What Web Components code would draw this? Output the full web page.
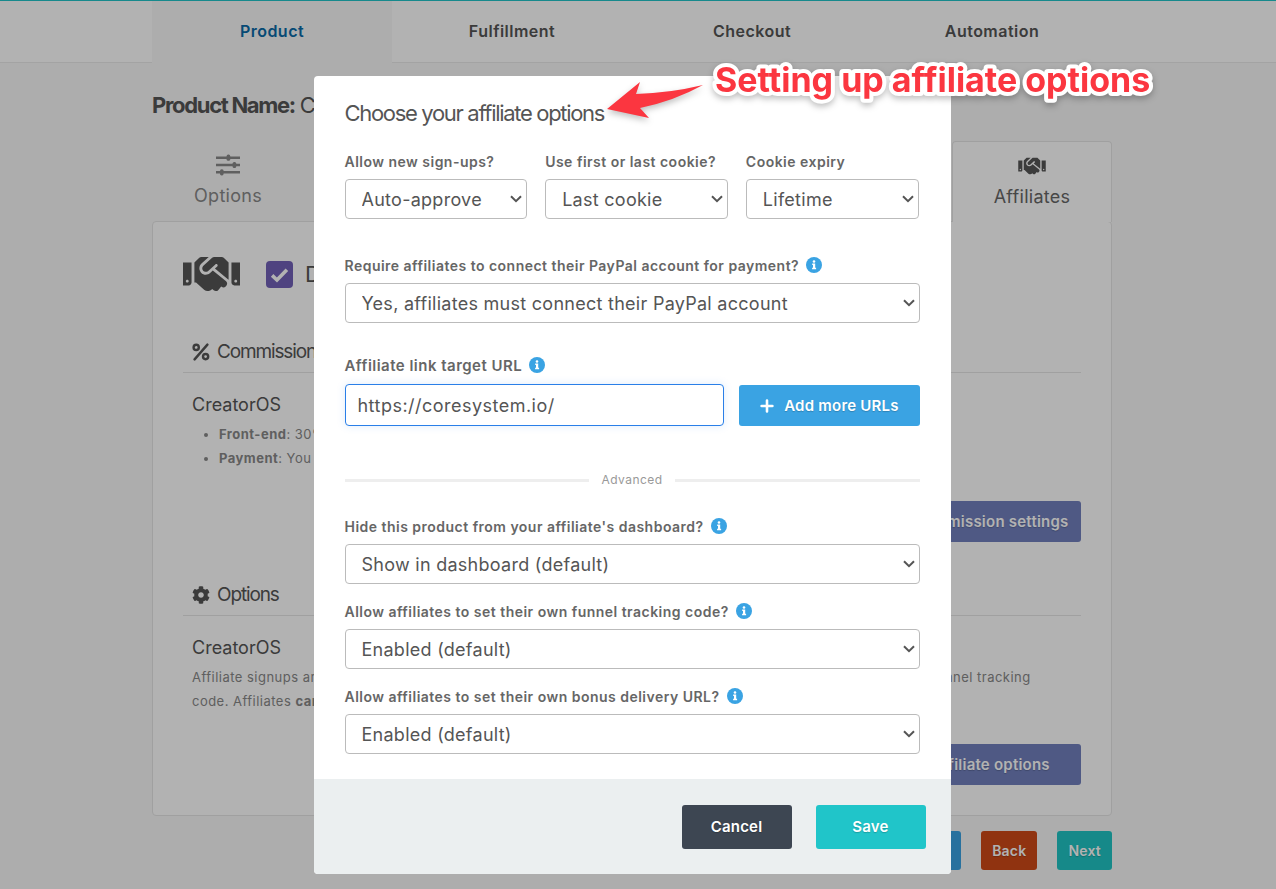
<!DOCTYPE html>
<html lang="en">
<head>
<meta charset="utf-8">
<meta name="viewport" content="width=device-width, initial-scale=1">
<title>Product - Affiliates</title>
<style>
    :root {
        --teal: #20c5c9;
        --blue: #3aa3e3;
        --track-wide: 0.03em;
        --track-mid: 0.015em;
        --track-tight: -0.06em;
        --gutter: 12px;
    }
    body {
        margin: 0;
        min-height: 100vh;
        overflow: hidden;
        background: #f8f8f8;
        color: #555;
        font-family: Inter, "Liberation Sans", sans-serif;
        letter-spacing: var(--track-wide);
    }
</style>
</head>
<body>
<product-page>
    <step-nav>
        <a href="#product" class="active">Product</a>
        <a href="#fulfillment">Fulfillment</a>
        <a href="#checkout">Checkout</a>
        <a href="#automation">Automation</a>
    </step-nav>
    <product-panel>
        <settings-section icon="percent" name="Commissions" product="CreatorOS" action="Edit commission settings">
            <ul>
                <li><b>Front-end</b>: 30%</li>
                <li><b>Payment</b>: You</li>
            </ul>
        </settings-section>
        <settings-section icon="cog" name="Options" product="CreatorOS" action="Edit affiliate options">
            <p>Affiliate signups are approved automatically and the last cookie is used for a lifetime. They can all set their own funnel tracking code. Affiliates <b>can</b></p>
        </settings-section>
    </product-panel>
</product-page>

<modal-dialog name="Choose your affiliate options">
    <div class="row">
        <select-field label="Allow new sign-ups?" value="Auto-approve"></select-field>
        <select-field label="Use first or last cookie?" value="Last cookie"></select-field>
        <select-field label="Cookie expiry" value="Lifetime"></select-field>
    </div>
    <select-field class="wide" info label="Require affiliates to connect their PayPal account for payment?" value="Yes, affiliates must connect their PayPal account"></select-field>
    <url-field label="Affiliate link target URL" value="https://coresystem.io/"></url-field>
    <line-divider>Advanced</line-divider>
    <div class="stack">
        <select-field info label="Hide this product from your affiliate's dashboard?" value="Show in dashboard (default)"></select-field>
        <select-field info label="Allow affiliates to set their own funnel tracking code?" value="Enabled (default)"></select-field>
        <select-field info label="Allow affiliates to set their own bonus delivery URL?" value="Enabled (default)"></select-field>
    </div>
    <action-button slot="footer" color="#3d4652" size="large">Cancel</action-button>
    <action-button slot="footer" color="#20c5c9" size="large">Save</action-button>
</modal-dialog>

<callout-note></callout-note>

<style>
    .row {
        display: grid;
        grid-template-columns: 182fr 182fr 173fr;
        gap: 18px;
    }
    .wide {
        margin: 37px 0 33px;
    }
    .stack {
        display: grid;
        gap: 18px;
    }
</style>

<script>
const icons = {
    handshake: ["0 0 640 512", `<path d="M434.7 64h-85.9c-8 0-15.7 3-21.6 8.4l-98.3 90c-.1.1-.2.3-.3.4-16.6 15.6-16.3 40.5-2.1 56 12.7 13.9 39.4 17.6 56.1 2.7.1-.1.3-.1.4-.2l79.9-73.2c6.5-5.9 16.7-5.5 22.6 1 6 6.5 5.5 16.6-1 22.6l-26.1 23.9L504 313.8c2.9 2.4 5.5 5 7.9 7.7V128l-54.6-54.6c-5.9-6-14.1-9.4-22.6-9.4zM544 128.2v223.9c0 17.7 14.3 32 32 32h64V128.2h-96zm48 223.9c-8.8 0-16-7.2-16-16s7.2-16 16-16 16 7.2 16 16-7.2 16-16 16zM0 384h64c17.7 0 32-14.3 32-32V128.2H0V384zm48-63.9c8.8 0 16 7.2 16 16s-7.2 16-16 16-16-7.2-16-16c0-8.9 7.2-16 16-16zm435.9 18.6L334.6 217.5l-30 27.5c-29.7 27.1-75.2 24.5-101.7-4.4-26.9-29.4-24.8-74.9 4.4-101.7L289.1 64h-83.8c-8.5 0-16.6 3.4-22.6 9.4L128 128v223.9h18.3l90.5 81.9c27.4 22.3 67.7 18.1 90-9.3l.2-.2 17.9 15.5c15.9 13 39.4 10.5 52.3-5.4l31.4-38.6 5.4 4.4c13.7 11.1 33.9 9.1 45-4.6l9.5-11.7c11.2-13.8 9.1-33.9-4.6-45.1z"/>`],
    cog: ["0 0 512 512", `<path d="M487.4 315.7l-42.6-24.6c4.3-23.2 4.3-47 0-70.2l42.6-24.6c4.9-2.8 7.1-8.6 5.5-14-11.1-35.6-30-67.8-54.7-94.6-3.8-4.1-10-5.1-14.8-2.3L380.8 110c-17.9-15.4-38.5-27.3-60.8-35.1V25.8c0-5.6-3.9-10.5-9.4-11.7-36.7-8.2-74.3-7.8-109.2 0-5.5 1.2-9.4 6.1-9.4 11.7V75c-22.2 7.9-42.8 19.8-60.8 35.1L88.7 85.5c-4.9-2.8-11-1.9-14.8 2.3-24.7 26.7-43.6 58.9-54.7 94.6-1.7 5.4.6 11.2 5.5 14L67.3 221c-4.3 23.2-4.3 47 0 70.2l-42.6 24.6c-4.9 2.8-7.1 8.6-5.5 14 11.1 35.6 30 67.8 54.7 94.6 3.8 4.1 10 5.1 14.8 2.3l42.6-24.6c17.9 15.4 38.5 27.3 60.8 35.1v49.2c0 5.6 3.9 10.5 9.4 11.7 36.7 8.2 74.3 7.8 109.2 0 5.5-1.2 9.4-6.1 9.4-11.7v-49.2c22.2-7.9 42.8-19.8 60.8-35.1l42.6 24.6c4.9 2.8 11 1.9 14.8-2.3 24.7-26.7 43.6-58.9 54.7-94.6 1.5-5.5-.7-11.3-5.6-14.1zM256 336c-44.1 0-80-35.9-80-80s35.9-80 80-80 80 35.9 80 80-35.9 80-80 80z"/>`],
    percent: ["0 0 18 18", `<g fill="none" stroke="currentColor" stroke-width="2.4" stroke-linecap="round"><circle cx="4.2" cy="4.4" r="2.6"/><circle cx="13.6" cy="13.6" r="2.6"/><path d="M15.4 1.6L2.6 16.4"/></g>`],
    sliders: ["0 0 26 22", `<path d="M1 2.5h24v2.4H1zM1 9.8h24v2.4H1zM1 17.1h24v2.4H1z"/><rect x="11.6" y="0.6" width="3.6" height="6.2" rx="1.6"/><rect x="17.6" y="7.9" width="3.6" height="6.2" rx="1.6"/><rect x="5" y="15.2" width="3.6" height="6.2" rx="1.6"/>`],
    info: ["0 0 16 16", `<circle cx="8" cy="8" r="8"/><path fill="#fff" d="M6.2 6.5h3v4.2h.9v1.5H6.1v-1.5H7V8h-.8z"/><circle cx="8" cy="4.5" r="1.3" fill="#fff"/>`],
    plus: ["0 0 16 16", `<path d="M8 2.6v10.8M2.6 8h10.8" fill="none" stroke="currentColor" stroke-width="2.6" stroke-linecap="round"/>`],
    check: ["0 0 18 18", `<path d="M2 9.8l4.6 4.4L16 4.4" fill="none" stroke="currentColor" stroke-width="3.4"/>`],
    chevron: ["0 0 12 8", `<path d="M1 1.2l5 5 5-5" fill="none" stroke="currentColor" stroke-width="2"/>`]
};

class SvgIcon extends HTMLElement {

    constructor() {
        super();
        this.attachShadow({mode: "open"});
        const [box, shape] = icons[this.getAttribute("name")];
        this.shadowRoot.innerHTML = `
            <style>
                :host {
                    display: inline-block;
                    flex: none;
                    width: 16px;
                    height: 16px;
                }
                svg {
                    display: block;
                    width: 100%;
                    height: 100%;
                }
            </style>
            <svg viewBox="${box}" fill="currentColor" aria-hidden="true">${shape}</svg>
        `;
    }

}

class ActionButton extends HTMLElement {

    constructor() {
        super();
        this.attachShadow({mode: "open"});
        this.shadowRoot.innerHTML = `
            <style>
                :host {
                    display: block;
                }
                button {
                    display: flex;
                    align-items: center;
                    justify-content: center;
                    gap: 9px;
                    width: 100%;
                    height: 41px;
                    padding: 0 11px;
                    border: 0;
                    border-radius: 3px;
                    background: ${this.getAttribute("color")};
                    color: #fff;
                    font: 600 15px/20px Inter, "Liberation Sans", sans-serif;
                    letter-spacing: var(--track-mid);
                    text-shadow: 0 1px 1px rgba(0, 0, 0, 0.2);
                    white-space: nowrap;
                }
                :host([size="large"]) button {
                    width: 110px;
                    height: 44px;
                }
                :host([size="small"]) button {
                    height: 39px;
                    font-size: 14px;
                }
            </style>
            <button type="button"><slot></slot></button>
        `;
    }

}

class StepNav extends HTMLElement {

    constructor() {
        super();
        this.attachShadow({mode: "open"});
        this.shadowRoot.innerHTML = `
            <style>
                :host {
                    display: block;
                    border-top: 1px solid var(--teal);
                    background: #fff;
                    box-shadow: inset 0 -1px #eaeaea;
                    padding-right: var(--gutter);
                }
                nav {
                    display: grid;
                    grid-template-columns: repeat(4, 1fr);
                    max-width: 960px;
                    margin: 0 auto;
                }
                ::slotted(a) {
                    padding: 20px 0 22px;
                    color: #555;
                    font-size: 16px;
                    font-weight: 600;
                    line-height: 20px;
                    text-align: center;
                    text-decoration: none;
                }
                ::slotted(a.active) {
                    background: #f8f8f8;
                    color: #0a6aa8;
                }
            </style>
            <nav><slot></slot></nav>
        `;
    }

}

class ProductPage extends HTMLElement {

    constructor() {
        super();
        this.attachShadow({mode: "open"});
        this.shadowRoot.innerHTML = `
            <style>
                :host {
                    display: block;
                }
            </style>
            <slot></slot>
        `;
    }

}

class ProductPanel extends HTMLElement {

    constructor() {
        super();
        this.attachShadow({mode: "open"});
        this.shadowRoot.innerHTML = `
            <style>
                :host {
                    display: block;
                    padding: 27px var(--gutter) 0 0;
                }
                main {
                    max-width: 960px;
                    margin: 0 auto;
                }
                h1 {
                    margin: 0 0 21px;
                    font-size: 22px;
                    font-weight: 400;
                    line-height: 30px;
                    letter-spacing: var(--track-tight);
                }
                .tabs {
                    display: flex;
                    justify-content: space-between;
                    margin-bottom: -1px;
                }
                .tabs a {
                    box-sizing: border-box;
                    display: flex;
                    flex-direction: column;
                    align-items: center;
                    gap: 9px;
                    width: 152px;
                    height: 81px;
                    padding-top: 13px;
                    color: #888;
                    font-size: 18px;
                    line-height: 22px;
                    letter-spacing: var(--track-mid);
                    text-decoration: none;
                }
                .tabs svg-icon {
                    width: 26px;
                    height: 22px;
                }
                .tabs a.active {
                    z-index: 1;
                    width: 160px;
                    border: 1px solid #e5e5e5;
                    border-bottom: 0;
                    border-radius: 4px 4px 0 0;
                    background: #fff;
                    color: #666;
                }
                .active svg-icon {
                    width: 32px;
                    color: #555;
                }
                .panel {
                    padding: 28px 30px 30px;
                    border: 1px solid #e5e5e5;
                    border-radius: 4px;
                    background: #fff;
                }
                .toggle {
                    display: flex;
                    align-items: center;
                    gap: 26px;
                    height: 48px;
                    padding-bottom: 1px;
                    font-size: 22px;
                }
                .toggle > svg-icon {
                    width: 57px;
                    height: 46px;
                }
                label {
                    display: flex;
                    align-items: center;
                    gap: 12px;
                }
                .box {
                    display: grid;
                    place-items: center;
                    color: #fff;
                }
                .box > * {
                    grid-area: 1 / 1;
                }
                .box svg-icon {
                    width: 19px;
                    height: 19px;
                    pointer-events: none;
                }
                input {
                    appearance: none;
                    width: 27px;
                    height: 27px;
                    margin: 0;
                    border-radius: 4px;
                    background: #7160b8;
                }
                .pager {
                    display: flex;
                    justify-content: flex-end;
                    gap: 20px;
                    margin-top: 15px;
                }
            </style>
            <main>
                <h1><b>Product Name:</b> CreatorOS</h1>
                <div class="tabs">
                    <a href="#options"><svg-icon name="sliders"></svg-icon>Options</a>
                    <a href="#affiliates" class="active"><svg-icon name="handshake"></svg-icon>Affiliates</a>
                </div>
                <div class="panel">
                    <div class="toggle">
                        <svg-icon name="handshake"></svg-icon>
                        <label>
                            <span class="box"><input type="checkbox" checked><svg-icon name="check"></svg-icon></span>
                            Do
                        </label>
                    </div>
                    <slot></slot>
                </div>
                <div class="pager">
                    <action-button size="small" color="#3aa3e3">Save</action-button>
                    <action-button size="small" color="#ce4a18">Back</action-button>
                    <action-button size="small" color="#20c5c4">Next</action-button>
                </div>
            </main>
        `;
    }

}

class SettingsSection extends HTMLElement {

    constructor() {
        super();
        this.attachShadow({mode: "open"});
        this.shadowRoot.innerHTML = `
            <style>
                :host {
                    display: block;
                    margin-top: 38px;
                }
                h2 {
                    display: flex;
                    align-items: center;
                    gap: 7px;
                    margin: 0;
                    padding: 0 9px 5px;
                    border-bottom: 1px solid #e5e5e5;
                    font-size: 19px;
                    font-weight: 400;
                    line-height: 30px;
                    letter-spacing: var(--track-tight);
                }
                h2 svg-icon {
                    width: 18px;
                    height: 18px;
                }
                .info {
                    padding: 20px 9px 31px;
                }
                h3 {
                    margin: 0 0 5px;
                    font-size: 18px;
                    font-weight: 400;
                    line-height: 24px;
                    letter-spacing: 0;
                }
                .text {
                    max-width: 860px;
                    color: #888;
                    font-size: 13px;
                    line-height: 24px;
                }
                ::slotted(ul) {
                    margin: 0;
                    padding-left: 27px;
                }
                ::slotted(p) {
                    margin: 0;
                }
                action-button {
                    width: 236px;
                    margin-left: auto;
                }
            </style>
            <h2><svg-icon name="${this.getAttribute("icon")}"></svg-icon>${this.getAttribute("name")}</h2>
            <div class="info">
                <h3>${this.getAttribute("product")}</h3>
                <div class="text"><slot></slot></div>
            </div>
            <action-button color="#7180be"><svg-icon name="cog"></svg-icon>${this.getAttribute("action")}</action-button>
        `;
    }

}

class ModalDialog extends HTMLElement {

    constructor() {
        super();
        this.attachShadow({mode: "open"});
        this.shadowRoot.innerHTML = `
            <style>
                :host {
                    position: absolute;
                    z-index: 2;
                    inset: 0;
                    padding: 76px var(--gutter) 0 0;
                    background: rgba(0, 0, 0, 0.3);
                }
                section {
                    max-width: 637px;
                    margin: 0 auto;
                    border-radius: 4px;
                    background: #fff;
                    overflow: hidden;
                }
                .content {
                    padding: 25px 31px;
                }
                h2 {
                    margin: 0 0 27px;
                    font-size: 22px;
                    font-weight: 400;
                    line-height: 24px;
                    letter-spacing: var(--track-tight);
                }
                footer {
                    display: flex;
                    justify-content: flex-end;
                    gap: 24px;
                    padding: 26px 25px 25px;
                    background: #ebeff0;
                }
            </style>
            <section role="dialog" aria-labelledby="title">
                <div class="content">
                    <h2 id="title">${this.getAttribute("name")}</h2>
                    <slot></slot>
                </div>
                <footer><slot name="footer"></slot></footer>
            </section>
        `;
    }

}

const fieldStyle = `
    :host {
        display: block;
    }
    .label {
        display: flex;
        align-items: center;
        gap: 7px;
        margin-bottom: 7px;
        color: #666;
        font-size: 14px;
        font-weight: 600;
        line-height: 20px;
        white-space: nowrap;
    }
    .label svg-icon {
        margin-bottom: 2px;
        color: var(--blue);
    }
    select, input {
        box-sizing: border-box;
        width: 100%;
        margin: 0;
        border: 1px solid #bbb;
        border-radius: 4px;
        background: #fff;
        color: #555;
        font-family: inherit;
        font-size: 18px;
        letter-spacing: inherit;
    }
`;

class SelectField extends HTMLElement {

    constructor() {
        super();
        this.attachShadow({mode: "open"});
        const info = this.hasAttribute("info") ? `<svg-icon name="info"></svg-icon>` : "";
        this.shadowRoot.innerHTML = `
            <style>
                ${fieldStyle}
                select {
                    appearance: none;
                    grid-area: 1 / 1;
                    height: 40px;
                    padding: 0 26px 0 16px;
                    letter-spacing: var(--track-mid);
                }
                .control {
                    display: grid;
                    align-items: center;
                    justify-items: end;
                }
                .control svg-icon {
                    grid-area: 1 / 1;
                    width: 12px;
                    height: 8px;
                    margin-right: 5px;
                    color: #555;
                    pointer-events: none;
                }
            </style>
            <div class="label"><label for="field">${this.getAttribute("label")}</label>${info}</div>
            <div class="control">
                <select id="field"><option>${this.getAttribute("value")}</option></select>
                <svg-icon name="chevron"></svg-icon>
            </div>
        `;
    }

}

class UrlField extends HTMLElement {

    constructor() {
        super();
        this.attachShadow({mode: "open"});
        this.shadowRoot.innerHTML = `
            <style>
                ${fieldStyle}
                .label {
                    margin-bottom: 8px;
                    font-size: 15px;
                }
                .control {
                    display: grid;
                    grid-template-columns: 1fr 181px;
                    align-items: end;
                    gap: 15px;
                }
                input {
                    height: 42px;
                    padding: 0 12px;
                    border-color: #2a7fe8;
                    box-shadow: 0 0 8px rgba(42, 127, 232, 0.15);
                }
            </style>
            <div class="label"><label for="url">${this.getAttribute("label")}</label><svg-icon name="info"></svg-icon></div>
            <div class="control">
                <input id="url" type="text" value="${this.getAttribute("value")}">
                <action-button color="#3aa3e3"><svg-icon name="plus"></svg-icon>Add more URLs</action-button>
            </div>
        `;
    }

}

class LineDivider extends HTMLElement {

    constructor() {
        super();
        this.attachShadow({mode: "open"});
        this.shadowRoot.innerHTML = `
            <style>
                :host {
                    display: flex;
                    align-items: center;
                    gap: 12px;
                    margin: 44px 0 27px;
                    color: #999;
                    font-size: 12px;
                    line-height: 20px;
                }
                :host::before, :host::after {
                    content: "";
                    flex: 1;
                    height: 3px;
                    background: #eee;
                }
            </style>
            <slot></slot>
        `;
    }

}

// red note and arrow pinned over the dialog title
class CalloutNote extends HTMLElement {

    constructor() {
        super();
        this.attachShadow({mode: "open"});
        this.shadowRoot.innerHTML = `
            <style>
                :host {
                    position: absolute;
                    z-index: 3;
                    top: 50px;
                    left: calc(50% - 38px);
                    pointer-events: none;
                }
                svg {
                    display: block;
                    filter: drop-shadow(0 3px 3px rgba(0, 0, 0, 0.25));
                }
                text {
                    font: 700 34px Inter, "Liberation Sans", sans-serif;
                    letter-spacing: 0;
                    stroke: #fff;
                    stroke-width: 8px;
                    stroke-linejoin: round;
                    paint-order: stroke;
                }
            </style>
            <svg width="600" height="80" fill="#fb3640">
                <path d="M7 59L40 32L36 44Q70 43 103 35Q74 51 40 58L49 68Z"/>
                <text x="115" y="42">Setting up affiliate options</text>
            </svg>
        `;
    }

}

customElements.define("svg-icon", SvgIcon);
customElements.define("action-button", ActionButton);
customElements.define("step-nav", StepNav);
customElements.define("product-page", ProductPage);
customElements.define("product-panel", ProductPanel);
customElements.define("settings-section", SettingsSection);
customElements.define("modal-dialog", ModalDialog);
customElements.define("select-field", SelectField);
customElements.define("url-field", UrlField);
customElements.define("line-divider", LineDivider);
customElements.define("callout-note", CalloutNote);
</script>
</body>
</html>
